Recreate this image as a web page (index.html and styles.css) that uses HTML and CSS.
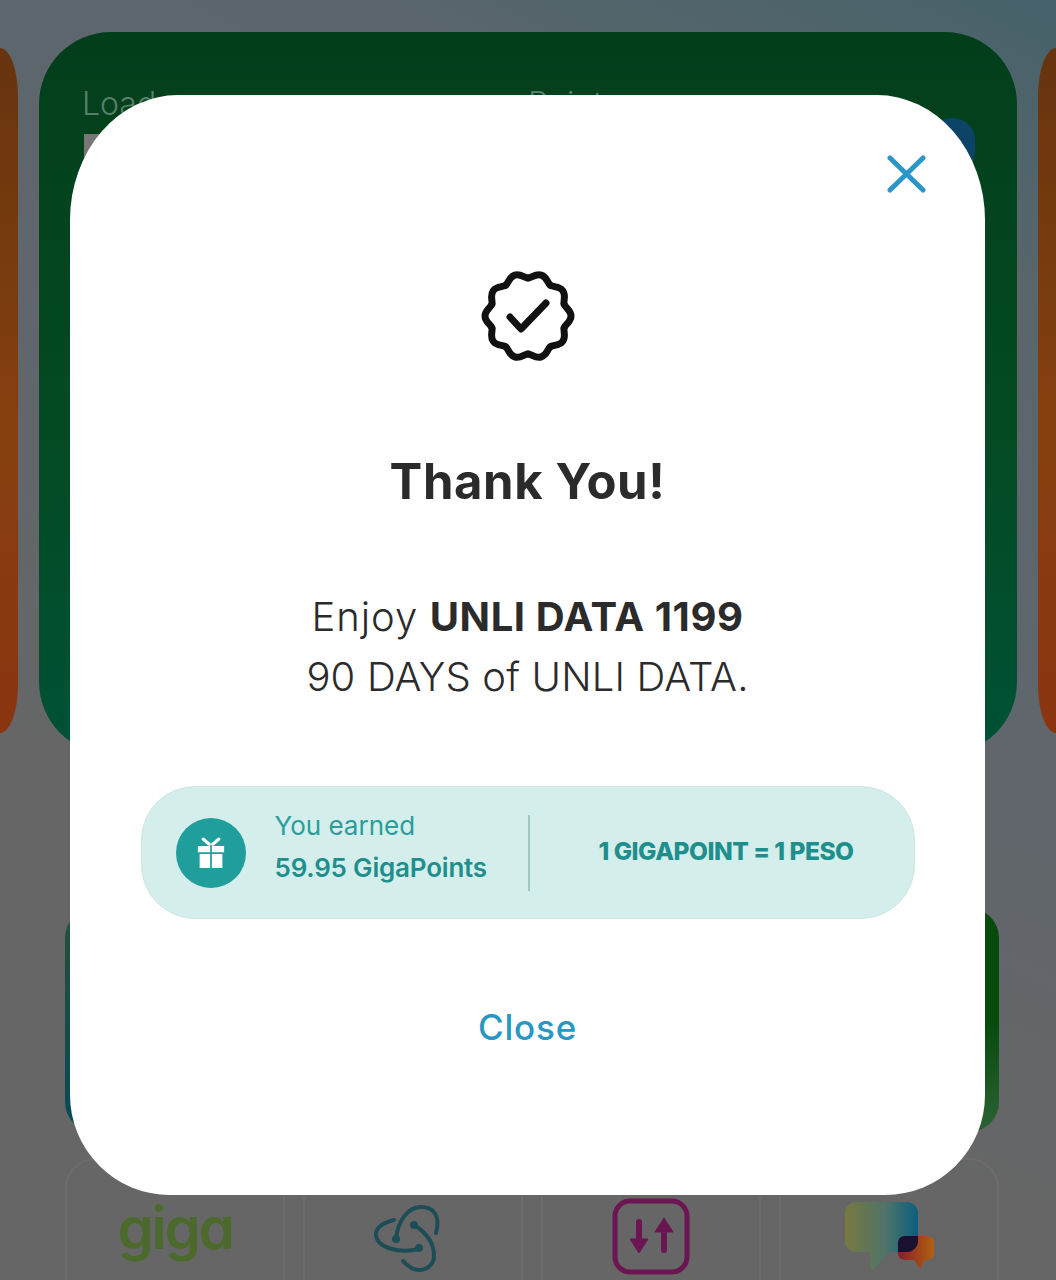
FILE: index.html
```html
<!DOCTYPE html>
<html lang="en">
<head>
  <meta charset="UTF-8">
  <meta name="viewport" content="width=device-width, initial-scale=1.0">
  <title>Thank You</title>
  <link rel="stylesheet" href="styles.css">
</head>
<body>
  <!-- Dimmed dashboard behind the dialog -->
  <div class="page">
    <div class="carousel">
      <div class="slide-side"></div>
      <div class="slide-main">
        <div class="balance balance-load">
          <div class="balance-label">Load</div>
          <div class="balance-value"><span class="balance-chip"></span></div>
        </div>
        <div class="balance balance-points">
          <div class="balance-label">Points</div>
        </div>
        <div class="balance-btn"></div>
      </div>
      <div class="slide-side"></div>
    </div>

    <div class="promo"></div>

    <div class="tiles">
      <div class="tile"><span class="giga-logo">giga</span></div>
      <div class="tile">
        <svg class="tile-icon icon-connect" width="72" height="76" viewBox="0 0 72 76" fill="none" stroke="#1d4e58" stroke-width="4" stroke-linecap="round">
          <path d="M23 19C10 22 5 28 5 33C5 46 26 53 48 48"/>
          <path d="M25 38C27 18 38 6 50 6C62 6 70 14 65 32"/>
          <path d="M43 24C56 32 63 42 63 55C63 68 46 76 32 60"/>
          <circle cx="48" cy="47" r="4" fill="#1d4e58" stroke="none"/>
          <circle cx="25" cy="38" r="4" fill="#1d4e58" stroke="none"/>
          <circle cx="43" cy="24" r="4" fill="#1d4e58" stroke="none"/>
        </svg>
      </div>
      <div class="tile">
        <svg class="tile-icon" width="78" height="78" viewBox="0 0 78 78" fill="none">
          <rect x="3" y="3" width="72" height="71" rx="15" stroke="#6b1652" stroke-width="5"/>
          <path d="M27 24V46" stroke="#6b1652" stroke-width="6" stroke-linecap="round"/>
          <path d="M18 41H36L27 55Z" fill="#6b1652" stroke="#6b1652" stroke-width="1" stroke-linejoin="round"/>
          <path d="M52 33V52" stroke="#6b1652" stroke-width="6" stroke-linecap="round"/>
          <path d="M43 34H61L52 20Z" fill="#6b1652" stroke="#6b1652" stroke-width="1" stroke-linejoin="round"/>
        </svg>
      </div>
      <div class="tile">
        <svg class="tile-icon" width="92" height="76" viewBox="0 0 92 76">
          <defs>
            <linearGradient id="chatBig" x1="0" y1="0" x2="1" y2="0">
              <stop offset="0" stop-color="#78793f"/>
              <stop offset="0.55" stop-color="#4f7468"/>
              <stop offset="1" stop-color="#0b5f82"/>
            </linearGradient>
            <linearGradient id="chatSmall" x1="0" y1="0" x2="1" y2="0">
              <stop offset="0" stop-color="#8a1c2c"/>
              <stop offset="1" stop-color="#b0600f"/>
            </linearGradient>
            <path id="bubbleBig" d="M15 4H64C70 4 75 9 75 15V43C75 49 70 54 64 54H46L31 71C29 73 27 72 27 69V54H15C7 54 2 49 2 43V15C2 9 7 4 15 4Z"/>
            <path id="bubbleSmall" d="M62 38H84C88 38 91 41 91 45V55C91 59 88 62 84 62H82L77 71L71 62H62C58 62 55 59 55 55V45C55 41 58 38 62 38Z"/>
            <clipPath id="bubbleClip"><use href="#bubbleBig"/></clipPath>
          </defs>
          <use href="#bubbleBig" fill="url(#chatBig)"/>
          <use href="#bubbleSmall" fill="url(#chatSmall)"/>
          <use href="#bubbleSmall" fill="#1a1030" clip-path="url(#bubbleClip)"/>
        </svg>
      </div>
    </div>
  </div>

  <div class="overlay">
    <div class="modal">
      <div class="modal-top">
        <svg width="40" height="40" viewBox="0 0 40 40" fill="none" stroke="#2a96c8" stroke-width="5" stroke-linecap="round">
          <path d="M3 4L36 36M36 4L3 36"/>
        </svg>
      </div>

      <svg class="badge" width="100" height="100" viewBox="0 0 100 100" fill="none" stroke="#111" stroke-width="7" stroke-linecap="round" stroke-linejoin="round">
        <defs>
          <path id="lobe" d="M38.26 13.86C41.5 12.8 44 7 50 7S58.5 12.8 61.74 13.86"/>
        </defs>
        <use href="#lobe" transform="rotate(18 50 50)"/>
        <use href="#lobe" transform="rotate(54 50 50)"/>
        <use href="#lobe" transform="rotate(90 50 50)"/>
        <use href="#lobe" transform="rotate(126 50 50)"/>
        <use href="#lobe" transform="rotate(162 50 50)"/>
        <use href="#lobe" transform="rotate(198 50 50)"/>
        <use href="#lobe" transform="rotate(234 50 50)"/>
        <use href="#lobe" transform="rotate(270 50 50)"/>
        <use href="#lobe" transform="rotate(306 50 50)"/>
        <use href="#lobe" transform="rotate(342 50 50)"/>
        <path d="M32 51L43 63L68 37"/>
      </svg>

      <h2 class="title">Thank You!</h2>

      <p class="message"><span class="message-lead">Enjoy</span> <b>UNLI DATA 1199</b><br>90 DAYS of UNLI DATA.</p>

      <div class="earned">
        <div class="earned-left">
          <div class="gift">
            <svg width="28" height="32" viewBox="0 0 32 36" fill="#fff">
              <path d="M1 10H15V17H1ZM17 10H31V17H17ZM3 19H15V35H3ZM17 19H29V35H17Z"/>
              <path d="M14 8L7 2M18 8L25 2" stroke="#fff" stroke-width="3.5" stroke-linecap="round" fill="none"/>
            </svg>
          </div>
          <div class="earned-text">
            <div>You earned</div>
            <div class="earned-points">59.95 GigaPoints</div>
          </div>
        </div>
        <div class="earned-right">1 GIGAPOINT = 1 PESO</div>
      </div>

      <a class="close-link" href="#">Close</a>
    </div>
  </div>
</body>
</html>
```

FILE: styles.css
```css
* {
  margin: 0;
  padding: 0;
  box-sizing: border-box;
}

body {
  width: 1056px;
  height: 1280px;
  overflow: hidden;
  position: relative;
  font-family: 'Inter', 'Noto Sans', sans-serif;
  background: linear-gradient(205deg, #46626a 0%, #5a666c 18%, #60666c 45%, #666666 70%, #666666 100%);
}

/* Page behind the dialog */
.page {
  height: 1280px;
  padding-top: 32px;
}

.carousel {
  display: flex;
  gap: 21px;
  height: 722px;
}

/* only the edge of the neighbouring slides shows */
.slide-side {
  flex: none;
  width: 18px;
  height: 685px;
  margin-top: 16px;
  background: linear-gradient(#66340f, #86400f 55%, #8a3510);
}

.slide-side:first-child {
  border-radius: 0 18px 18px 0 / 0 48px 48px 0;
}

.slide-side:last-child {
  border-radius: 18px 0 0 18px / 48px 0 0 48px;
}

.slide-main {
  flex: none;
  width: 978px;
  height: 722px;
  display: flex;
  padding: 56px 42px 0 43px;
  border-radius: 72px;
  background: linear-gradient(#033e1b 0%, #034a22 55%, #005236 100%);
}

.balance-load {
  flex: none;
  width: 446px;
}

.balance-points {
  flex: 1;
}

.balance-label {
  font-size: 32px;
  font-weight: 300;
  line-height: 32px;
  color: #56806a;
}

.balance-value {
  margin-top: 14px;
}

.balance-chip {
  display: block;
  width: 70px;
  height: 36px;
  margin-left: 2px;
  background: #777;
}

.balance-btn {
  flex: none;
  width: 46px;
  height: 56px;
  margin-top: 30px;
  border-radius: 22px;
  background: #0c4468;
}

.promo {
  height: 224px;
  margin: 154px 57px 0 65px;
  border-radius: 30px;
  background:
    linear-gradient(#26503a, #08495a) left / 50% 100% no-repeat,
    linear-gradient(#064a0c, #064a0c 50%, #2c6235) right / 50% 100% no-repeat;
}

.tiles {
  display: flex;
  gap: 18px;
  margin: 26px 57px 0 65px;
}

.tile {
  flex: 1;
  height: 122px;
  display: flex;
  justify-content: center;
  align-items: flex-start;
  padding-top: 38px;
  border: 2px solid #6c6c6c;
  border-bottom: 0;
  border-radius: 30px 30px 0 0;
}

.tile-icon {
  display: block;
}

.icon-connect {
  margin: 3px 12px 0 0;
}

.giga-logo {
  font-size: 58px;
  font-weight: 600;
  line-height: 60px;
  letter-spacing: -2.2px;
  font-feature-settings: "cv11";
  color: #4b6a2c;
}

/* Dialog */
.overlay {
  position: absolute;
  top: 0;
  left: 0;
  width: 100%;
  height: 100%;
  display: flex;
  justify-content: center;
  align-items: flex-start;
  padding: 95px 1px 0 0;
}

.modal {
  width: 915px;
  height: 1100px;
  display: flex;
  flex-direction: column;
  align-items: center;
  padding: 59px 70px 0;
  background: #fff;
  border-radius: 108px 108px 100px 100px / 125px 125px 100px 100px;
}

.modal-top {
  align-self: flex-end;
  display: flex;
  justify-content: flex-end;
  margin-right: -12px;
  height: 40px;
}

.badge {
  display: block;
  margin-top: 72px;
}

.title {
  margin-top: 85px;
  font-size: 49px;
  line-height: 62px;
  font-weight: 700;
  letter-spacing: 0.6px;
  color: #2b2b2b;
}

.message {
  margin-top: 74px;
  font-size: 40px;
  line-height: 60px;
  font-weight: 300;
  letter-spacing: 0.15px;
  text-align: center;
  color: #2b2b2b;
}

.message-lead {
  letter-spacing: 1px;
}

.message b {
  font-weight: 700;
  letter-spacing: 0.6px;
}

.earned {
  width: 774px;
  height: 133px;
  display: flex;
  align-items: center;
  margin-top: 79px;
  background: #d4eeeb;
  border: 1px solid #cfe6e3;
  border-radius: 54px;
  color: #2a9d9b;
}

.earned-left {
  width: 388px;
  height: 76px;
  display: flex;
  align-items: center;
  gap: 29px;
  padding-left: 34px;
  border-right: 2px solid #9cc9c5;
}

.gift {
  width: 70px;
  height: 70px;
  flex: none;
  display: flex;
  justify-content: center;
  align-items: center;
  border-radius: 50%;
  background: #1f9e9c;
}

.earned-text {
  padding-bottom: 12px;
  font-size: 26px;
  line-height: 42px;
}

.earned-points {
  font-weight: 600;
  letter-spacing: -0.2px;
  color: #1f8f8d;
}

.earned-right {
  flex: 1;
  padding: 0 0 4px 9px;
  text-align: center;
  font-size: 24.5px;
  font-weight: 800;
  letter-spacing: -0.5px;
  color: #1f8f8d;
}

.close-link {
  margin-top: 84px;
  font-size: 35px;
  line-height: 48px;
  font-weight: 500;
  letter-spacing: 0.8px;
  color: #2a96c4;
  text-decoration: none;
}
```
